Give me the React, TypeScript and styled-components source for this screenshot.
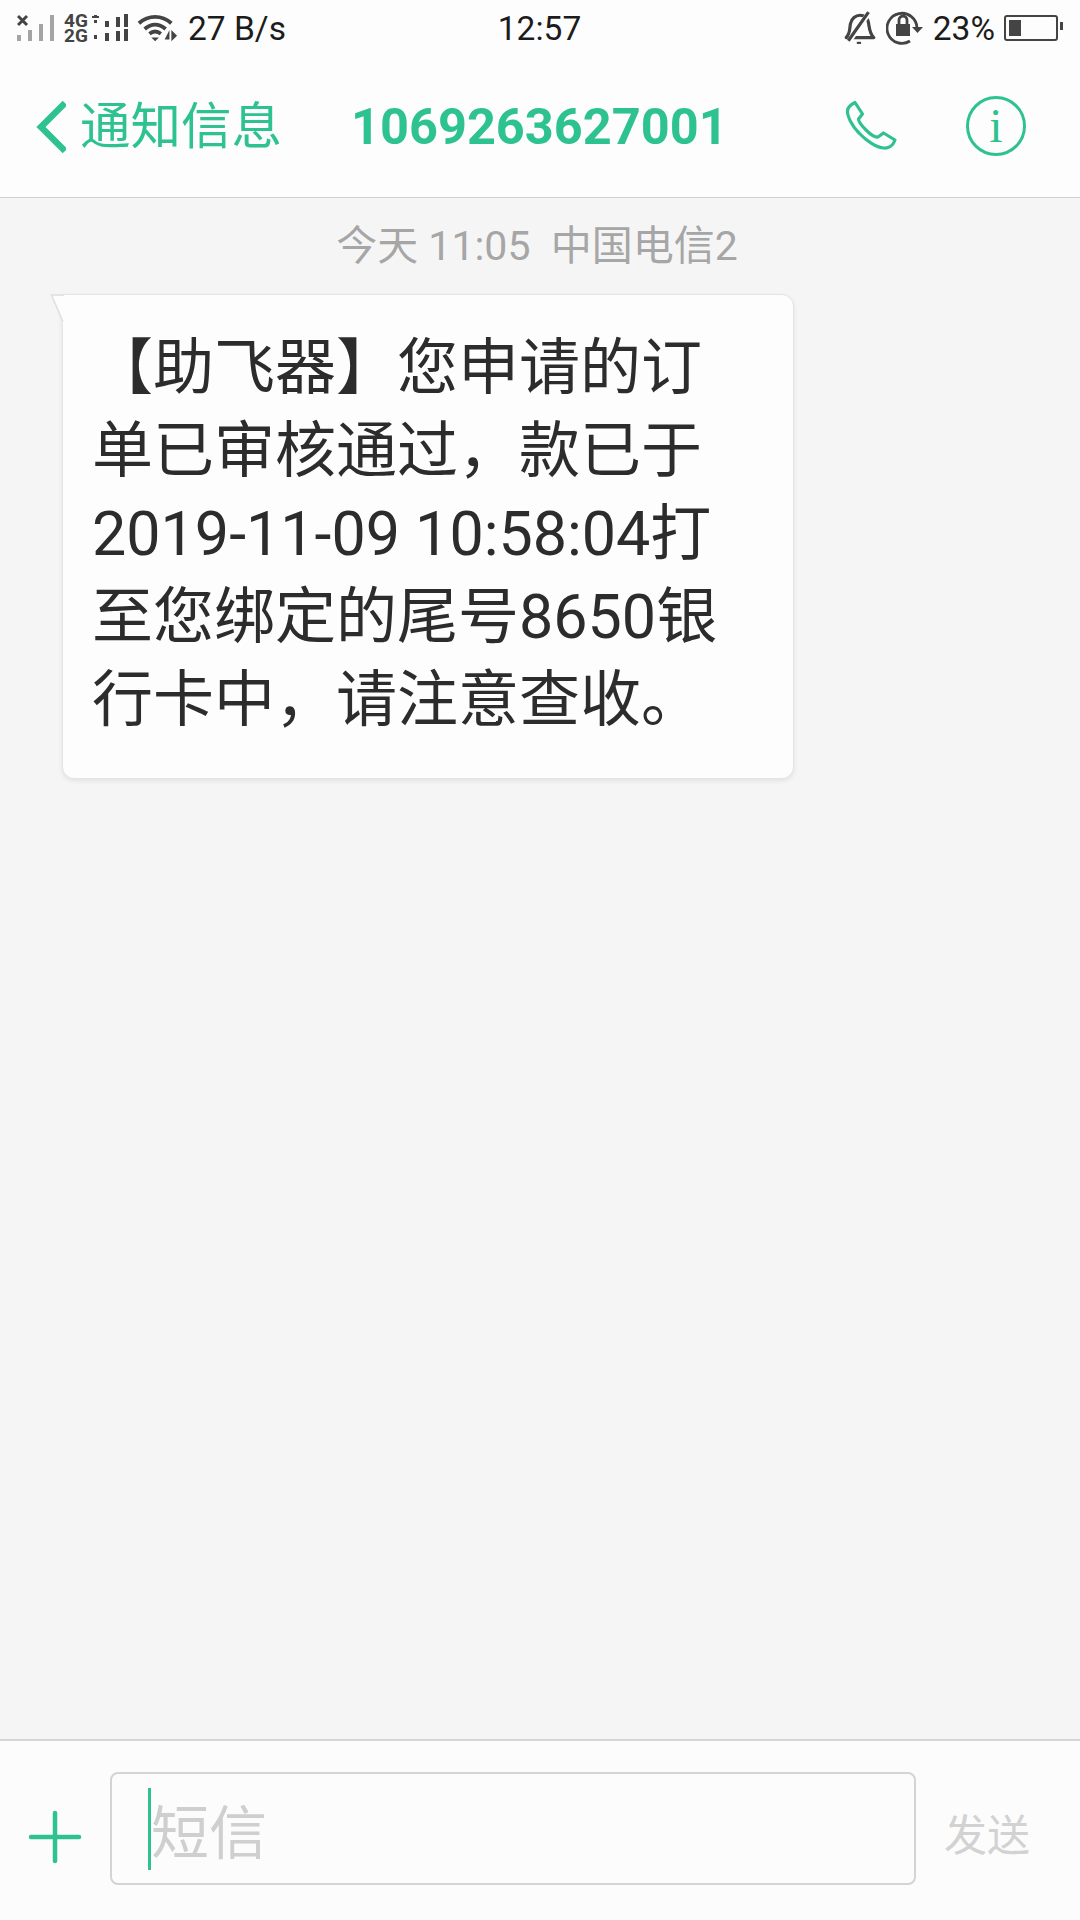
import React from 'react'
import styled, { createGlobalStyle } from 'styled-components'

const GREEN = '#2ec290'
const CJK = 'Roboto, "Noto Sans CJK SC", sans-serif'

const messageLines = [
  '【助飞器】您申请的订',
  '单已审核通过，款已于',
  '2019-11-09 10:58:04打',
  '至您绑定的尾号8650银',
  '行卡中，请注意查收。',
]

export default function App() {
  return (
    <Screen>
      <GlobalStyle />
      <StatusBar>
        <StatusLeft>
          <SimSignal />
          <DualNetwork />
          <WifiIcon />
          <StatusText>27 B/s</StatusText>
        </StatusLeft>
        <StatusText>12:57</StatusText>
        <StatusRight>
          <MutedBell />
          <RotationLock />
          <StatusText>23%</StatusText>
          <Battery />
        </StatusRight>
      </StatusBar>

      <Header>
        <BackButton>
          <svg width="30" height="54" viewBox="0 0 30 54" fill="none">
            <path d="M29 3 5 27l24 24" stroke={GREEN} strokeWidth="6.500" />
          </svg>
          <BackLabel>通知信息</BackLabel>
        </BackButton>
        <PhoneNumber>1069263627001</PhoneNumber>
        <HeaderActions>
          <svg width="54" height="54" viewBox="0 0 54 54" fill="none">
            <path
              d="M11 3.500c-4 2-7 4.500-7.500 8C3 17 8 27 15 34c7 7.500 17 14.500 25 15 4 .3 9-2 11-8l-11.500-7-5.500 4c-3 .5-8-3-12-7-4-4-7.500-8-7.500-11l4-5L11 3.500Z"
              stroke={GREEN}
              strokeWidth="3.200"
              strokeLinejoin="round"
            />
          </svg>
          <InfoButton>i</InfoButton>
        </HeaderActions>
      </Header>

      <Thread>
        <DateLine>今天 11:05&nbsp;&nbsp;中国电信2</DateLine>
        <Bubble>
          <BubbleTail width="16" height="32" viewBox="0 0 16 32" fill="none">
            <path d="M13 1.500H1L13 30Z" fill="#fdfdfd" />
            <path d="M14 1H1.500L13 28" stroke="#dedede" strokeWidth="1.500" />
          </BubbleTail>
          {messageLines.map((line) => (
            <BubbleLine key={line}>{line}</BubbleLine>
          ))}
        </Bubble>
      </Thread>

      <Composer>
        <PlusButton>
          <svg width="54" height="54" viewBox="0 0 54 54" fill="none">
            <path d="M3 27h48M27 3v48" stroke={GREEN} strokeWidth="4.500" strokeLinecap="round" />
          </svg>
        </PlusButton>
        <InputBox>
          <Caret />
          <Placeholder>短信</Placeholder>
        </InputBox>
        <SendButton>发送</SendButton>
      </Composer>
    </Screen>
  )
}

function SimSignal() {
  return (
    <svg width="38" height="30" viewBox="0 0 38 30" fill="none">
      <path d="M1 3l9 9M10 3l-9 9" stroke="#444" strokeWidth="3" />
      <path d="M0 22h4v6H0zM11 17h4v11h-4zM22 11h4v17h-4zM33 2h4v26h-4z" fill="#a4a4a4" />
    </svg>
  )
}

function DualNetwork() {
  return (
    <NetworkGroup>
      <NetworkLabels>
        <NetworkLabel>4G</NetworkLabel>
        <NetworkLabel>2G</NetworkLabel>
      </NetworkLabels>
      <svg width="36" height="30" viewBox="0 0 36 30" fill="#444">
        <path d="M2 2h3v3H2zM2 7h3v3H2zM2 22h3v4H2z" />
        <path d="M0 3h7v2H0z" />
        <path d="M13 8h4v6h-4zM13 20h4v8h-4zM24 4h4v10h-4zM24 18h4v10h-4zM32 1h4v13h-4zM32 16h4v12h-4z" />
      </svg>
    </NetworkGroup>
  )
}

function WifiIcon() {
  return (
    <svg width="42" height="30" viewBox="0 0 44 30" fill="none">
      <path d="M2 10C12 1 26 1 36 10M8 16c7-6 15-6 22 0M13 21c4-3 8-3 12 0" stroke="#444" strokeWidth="4" />
      <path d="M15 25h8l-4 4zM29 27l5-10v10zM36 17v12l6-6z" fill="#444" />
    </svg>
  )
}

function MutedBell() {
  return (
    <svg width="34" height="34" viewBox="0 0 32 32" fill="none">
      <path
        d="M3 25c4-4 3-8 4-13 1-5 5-8 9-8s7 2 8 7c1 6 1 10 5 14H3Z"
        stroke="#444"
        strokeWidth="3"
        strokeLinejoin="round"
      />
      <path d="M25 1 6 28" stroke="#fdfdfd" strokeWidth="5" />
      <path d="M24 1 5 28" stroke="#444" strokeWidth="3" />
      <path d="M13 29h4v2h-4z" fill="#444" />
    </svg>
  )
}

function RotationLock() {
  return (
    <svg width="38" height="34" viewBox="0 0 38 34" fill="none">
      <path d="M31 17A15 15 0 1 0 24 30" stroke="#444" strokeWidth="2.800" />
      <path d="M26 16h11l-5.500 6z" fill="#444" />
      <path d="M10 13h14v12H10z" fill="#444" />
      <path d="M13 13V9a4 4 0 0 1 8 0v4" stroke="#444" strokeWidth="2.800" />
    </svg>
  )
}

function Battery() {
  return (
    <BatteryShell>
      <BatteryLevel style={{ width: `${23 * 0.52}px` }} />
      <BatteryCap />
    </BatteryShell>
  )
}

const GlobalStyle = createGlobalStyle`
  html, body {
    margin: 0;
    padding: 0;
    background: #f5f5f5;
  }
`

const Screen = styled.div`
  display: flex;
  flex-direction: column;
  width: 1080px;
  height: 1920px;
  overflow: hidden;
  background: #f5f5f5;
  font-family: ${CJK};
`

const StatusBar = styled.div`
  display: grid;
  grid-template-columns: 1fr auto 1fr;
  align-items: center;
  height: 56px;
  padding: 0 18px 0 17px;
  background: #fdfdfd;
`

const StatusLeft = styled.div`
  display: flex;
  align-items: center;
  gap: 9px;
`

const StatusRight = styled.div`
  display: flex;
  align-items: center;
  justify-content: flex-end;
  gap: 9px;
`

const StatusText = styled.span`
  font-family: Roboto, sans-serif;
  font-size: 33.500px;
  color: #1c1c1c;
  white-space: nowrap;
`

const NetworkGroup = styled.div`
  display: flex;
  align-items: center;
`

const NetworkLabels = styled.div`
  display: flex;
  flex-direction: column;
  width: 28px;
`

const NetworkLabel = styled.span`
  font-family: Roboto, sans-serif;
  font-size: 19px;
  font-weight: 700;
  line-height: 15px;
  color: #444;
`

const BatteryShell = styled.div`
  position: relative;
  box-sizing: border-box;
  width: 54px;
  height: 26px;
  padding: 3px;
  border: 2px solid #444;
  border-radius: 3px;
  margin-right: 4px;
`

const BatteryLevel = styled.div`
  height: 100%;
  background: #444;
`

const BatteryCap = styled.div`
  position: absolute;
  top: 5px;
  right: -7px;
  width: 3px;
  height: 8px;
  background: #444;
`

const Header = styled.div`
  display: flex;
  align-items: center;
  box-sizing: border-box;
  height: 142px;
  padding: 0 54px 2px 36px;
  background: #fdfdfd;
  border-bottom: 1px solid #d2d2d2;
`

const BackButton = styled.div`
  display: flex;
  align-items: center;
  gap: 14px;
  width: 315px;
  margin-top: 2px;
`

const BackLabel = styled.span`
  font-size: 50.500px;
  line-height: 60px;
  color: ${GREEN};
  white-space: nowrap;
`

const PhoneNumber = styled.span`
  margin-top: 2px;
  font-family: Roboto, sans-serif;
  font-size: 50.500px;
  font-weight: 700;
  color: ${GREEN};
`

const HeaderActions = styled.div`
  display: flex;
  align-items: center;
  gap: 68px;
  margin-left: auto;
`

const InfoButton = styled.div`
  display: flex;
  align-items: center;
  justify-content: center;
  box-sizing: border-box;
  width: 60px;
  height: 60px;
  border: 3px solid ${GREEN};
  border-radius: 50%;
  font-family: "Liberation Serif", serif;
  font-size: 48px;
  color: ${GREEN};
`

const Thread = styled.div`
  flex: 1;
  display: flex;
  flex-direction: column;
  padding: 23px 0 0 62px;
`

const DateLine = styled.div`
  width: 950px;
  font-size: 41px;
  line-height: 50px;
  text-align: center;
  color: #a6a6a6;
  white-space: nowrap;
`

const Bubble = styled.div`
  position: relative;
  box-sizing: border-box;
  width: 732px;
  height: 485px;
  margin-top: 23px;
  padding: 32px 0 0 29px;
  background: #fdfdfd;
  border: 1px solid #e4e4e4;
  border-radius: 0 12px 12px 12px;
  box-shadow: 0 2px 5px rgba(0, 0, 0, 0.08);
`

const BubbleTail = styled.svg`
  position: absolute;
  top: -1px;
  left: -13px;
`

const BubbleLine = styled.div`
  font-size: 61px;
  line-height: 83px;
  color: #2c2c2c;
  white-space: nowrap;
`

const Composer = styled.div`
  display: flex;
  align-items: center;
  box-sizing: border-box;
  height: 181px;
  padding: 0 50px 4px 28px;
  background: #fcfcfc;
  border-top: 2px solid #d6d6d6;
`

const PlusButton = styled.div`
  display: flex;
  width: 82px;
  margin-top: 16px;
`

const InputBox = styled.div`
  display: flex;
  align-items: center;
  box-sizing: border-box;
  width: 806px;
  height: 113px;
  padding-left: 36px;
  border: 2px solid #d4d4d4;
  border-radius: 8px;
`

const Caret = styled.div`
  width: 3px;
  height: 82px;
  background: ${GREEN};
`

const Placeholder = styled.span`
  font-size: 58px;
  color: #cfcfcf;
`

const SendButton = styled.div`
  margin: 6px 0 0 auto;
  font-size: 43px;
  color: #d2d2d2;
`
